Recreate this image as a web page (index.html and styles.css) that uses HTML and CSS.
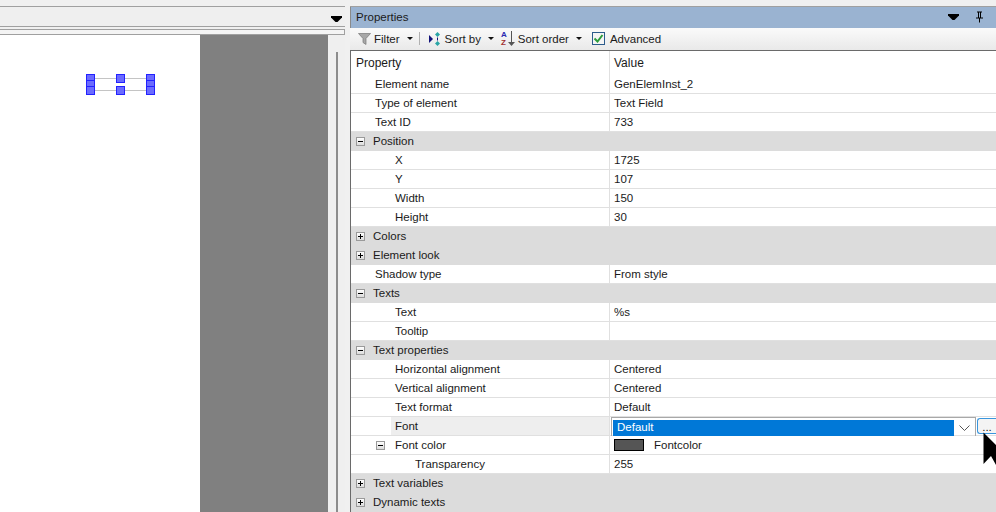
FILE: index.html
```html
<!DOCTYPE html>
<html lang="en">
<head>
  <meta charset="UTF-8">
  <title>Properties</title>
  <link rel="stylesheet" href="styles.css">
</head>
<body>
  <div class="app">
    <div class="editor">
      <div class="editor-head">
        <svg class="caret-big" width="11" height="6" viewBox="0 0 11 6"><path d="M0 0h11v1.500L6.500 6h-2L0 1.500z"/></svg>
      </div>
      <div class="editor-strip"></div>
      <div class="editor-body">
        <div class="canvas">
          <span class="sel-line top"></span>
          <span class="sel-line bottom"></span>
          <span class="handle h1"></span>
          <span class="handle h2"></span>
          <span class="handle h3"></span>
          <span class="handle h4"></span>
          <span class="handle h5"></span>
          <span class="handle h6"></span>
          <span class="handle h7"></span>
          <span class="handle h8"></span>
        </div>
        <div class="backdrop"></div>
        <div class="scroller"><div class="thumb"></div></div>
      </div>
    </div>

    <div class="props">
      <div class="title">
        <span>Properties</span>
        <svg class="caret-big" width="11" height="6" viewBox="0 0 11 6"><path d="M0 0h11v1.500L6.500 6h-2L0 1.500z"/></svg>
        <svg class="pin" width="9" height="12" viewBox="0 0 9 12"><path d="M2 .5h5v1H6v5h2v1H5v4H4v-4H1v-1h2v-5H2zM4 1.500v5h1v-5z"/></svg>
      </div>

      <div class="toolbar">
        <svg class="ico-filter" width="13" height="12" viewBox="0 0 13 12"><path d="M.5.500h12L8 5.500v6L5 9.500v-4z" fill="#a8a8a8" stroke="#777" stroke-width=".7"/></svg>
        <span class="tool-label">Filter</span>
        <i class="caret"></i>
        <span class="sep"></span>
        <svg class="ico-sort" width="13" height="14" viewBox="0 0 13 14"><path d="M0 3l4 4-4 4z" fill="#12127a"/><path d="M8.500 0l2.500 2.500L8.500 5 6 2.500z" fill="#2aa5a5"/><path d="M8.500 9l2.500 2.500L8.500 14 6 11.500z" fill="#2aa5a5"/><path d="M8 5.500h1v3H8z" fill="#12127a"/></svg>
        <span class="tool-label">Sort by</span>
        <i class="caret"></i>
        <span class="az"><b class="az-a">A</b><b class="az-z">Z</b></span>
        <svg class="ico-down" width="7" height="16" viewBox="0 0 7 16"><path d="M3 0h1v11h3l-3.500 4L0 11h3z" fill="#555"/></svg>
        <span class="tool-label">Sort order</span>
        <i class="caret"></i>
        <span class="check">
          <svg width="11" height="9" viewBox="0 0 11 9"><path d="M1.500 4.500l3 3 5-6.500" fill="none" stroke="#2c9c3c" stroke-width="2"/></svg>
        </span>
        <span class="tool-label">Advanced</span>
      </div>

      <div class="grid">
        <div class="row head"><div class="name">Property</div><div class="value">Value</div></div>
        <div class="row"><div class="name l1">Element name</div><div class="value">GenElemInst_2</div></div>
        <div class="row"><div class="name l1">Type of element</div><div class="value">Text Field</div></div>
        <div class="row"><div class="name l1">Text ID</div><div class="value">733</div></div>
        <div class="row group"><span class="tog minus"></span>Position</div>
        <div class="row"><div class="name l2">X</div><div class="value">1725</div></div>
        <div class="row"><div class="name l2">Y</div><div class="value">107</div></div>
        <div class="row"><div class="name l2">Width</div><div class="value">150</div></div>
        <div class="row"><div class="name l2">Height</div><div class="value">30</div></div>
        <div class="row group"><span class="tog plus"></span>Colors</div>
        <div class="row group"><span class="tog plus"></span>Element look</div>
        <div class="row"><div class="name l1">Shadow type</div><div class="value">From style</div></div>
        <div class="row group"><span class="tog minus"></span>Texts</div>
        <div class="row"><div class="name l2">Text</div><div class="value">%s</div></div>
        <div class="row"><div class="name l2">Tooltip</div><div class="value"></div></div>
        <div class="row group"><span class="tog minus"></span>Text properties</div>
        <div class="row"><div class="name l2">Horizontal alignment</div><div class="value">Centered</div></div>
        <div class="row"><div class="name l2">Vertical alignment</div><div class="value">Centered</div></div>
        <div class="row"><div class="name l2">Text format</div><div class="value">Default</div></div>
        <div class="row">
          <div class="name l2 active"><span>Font</span></div>
          <div class="value editing">
            <div class="combo">
              <div class="combo-text">Default</div>
              <svg class="combo-arrow" width="11" height="6" viewBox="0 0 11 6"><path d="M.5.500l5 5 5-5" fill="none" stroke="#555"/></svg>
            </div>
            <div class="dots">...</div>
          </div>
        </div>
        <div class="row">
          <div class="name l2"><span class="tog minus sub"></span>Font color</div>
          <div class="value"><span class="swatch"></span>Fontcolor</div>
        </div>
        <div class="row"><div class="name l3">Transparency</div><div class="value">255</div></div>
        <div class="row group"><span class="tog plus"></span>Text variables</div>
        <div class="row group"><span class="tog plus"></span>Dynamic texts</div>
      </div>
    </div>
  </div>

  <svg class="cursor" width="16" height="40" viewBox="0 0 16 40"><path d="M.5.500L16 16v16l-3 1-5-9-7.500 8z" fill="#000"/></svg>
</body>
</html>
```

FILE: styles.css
```css
html, body {
  margin: 0;
  height: 100%;
  overflow: hidden;
}
body {
  font-family: "Liberation Sans", Arial, sans-serif;
  font-size: 12px;
  color: #1a1a1a;
  background: #f0f0f0;
}
.app {
  display: flex;
  height: 512px;
  padding-top: 6px;
  box-sizing: border-box;
}

/* left side */
.editor {
  width: 345px;
  margin-right: 5px;
  display: flex;
  flex-direction: column;
  border-top: 1px solid #a0a0a0;
}
.editor-head {
  height: 19px;
  background: #efefef;
  border-bottom: 1px solid #a0a0a0;
  display: flex;
  align-items: center;
  justify-content: flex-end;
  padding-right: 3px;
  padding-top: 4px;
  box-sizing: content-box;
  height: 15px;
}
.editor-strip {
  height: 4px;
  margin-top: 2px;
  border-top: 1px solid #a0a0a0;
  border-bottom: 1px solid #a0a0a0;
  border-right: 1px solid #a0a0a0;
  background: #f4f4f4;
}
.editor-body {
  flex: 1;
  display: flex;
}
.canvas {
  width: 200px;
  background: #fff;
  position: relative;
}
.backdrop {
  width: 128px;
  background: #808080;
}
.scroller {
  flex: 1;
  background: #efefef;
  padding: 17px 0 0 8px;
}
.thumb {
  width: 2px;
  height: 100%;
  background: #8c8c8c;
}
.sel-line {
  position: absolute;
  left: 90px;
  width: 60px;
  height: 1px;
  background: #c4c4c4;
}
.sel-line.top { top: 43px; }
.sel-line.bottom { top: 55px; }
.handle {
  position: absolute;
  width: 7px;
  height: 7px;
  background: #6b6bff;
  border: 1px solid #2222ff;
}
.h1 { left: 86px; top: 39px; }
.h2 { left: 86px; top: 45px; }
.h3 { left: 86px; top: 51px; }
.h4 { left: 116px; top: 39px; }
.h5 { left: 116px; top: 51px; }
.h6 { left: 146px; top: 39px; }
.h7 { left: 146px; top: 45px; }
.h8 { left: 146px; top: 51px; }

/* right side */
.props {
  flex: 1;
  display: flex;
  flex-direction: column;
  min-width: 0;
  border-top: 1px solid #a0a0a0;
}
.title {
  height: 22px;
  background: #9ab3d1;
  display: flex;
  align-items: center;
  padding-left: 5px;
  border-left: 1px solid #8a8a8a;
  font-size: 11.500px;
}
.title span { flex: 1; }
.title .caret-big { margin-right: 16px; }
.title .pin { margin-right: 12px; }
.toolbar {
  height: 24px;
  display: flex;
  align-items: center;
  padding-left: 8px;
  background: linear-gradient(#fafafa, #e9e9e9);
  border-bottom: 1px solid #6a6a6a;
}
.tool-label { margin-left: 3px; font-size: 11.500px; }
.caret {
  width: 0;
  height: 0;
  border: 3px solid transparent;
  border-top: 3px solid #111;
  border-bottom: 0;
  margin-left: 7px;
}
.sep {
  width: 1px;
  height: 13px;
  background: #b0b0b0;
  margin: 0 9px 0 6px;
}
.az {
  display: flex;
  flex-direction: column;
  margin-left: 7px;
  font-size: 8px;
  line-height: 8px;
}
.az-a { color: #2a2ab0; }
.az-z { color: #a03030; }
.ico-down { margin-left: 1px; }
.check {
  width: 11px;
  height: 11px;
  border: 1px solid #2c5c8c;
  background: #f4f4f4;
  margin-left: 10px;
  margin-right: 2px;
  display: flex;
  align-items: center;
  justify-content: center;
}
.grid {
  flex: 1;
  background: #fff;
  border-left: 1px solid #6a6a6a;
}
.row {
  display: flex;
  height: 19px;
  box-sizing: border-box;
  border-bottom: 1px solid #e0e0e0;
  line-height: 19px;
  font-size: 11.500px;
}
.row.head {
  height: 24px;
  line-height: 25px;
  font-size: 12px;
  border-bottom: 0;
}
.name {
  width: 259px;
  flex: none;
  box-sizing: border-box;
  border-right: 1px solid #e0e0e0;
  padding-left: 5px;
  position: relative;
}
.value {
  flex: 1;
  padding-left: 4px;
  white-space: nowrap;
  min-width: 0;
}
.l1 { padding-left: 24px; }
.l2 { padding-left: 44px; }
.l3 { padding-left: 64px; }
.group {
  background: #dcdcdc;
  border-bottom: 0;
  padding-left: 22px;
  position: relative;
  margin-bottom: 0;
}
.tog {
  position: absolute;
  left: 5px;
  top: 5px;
  width: 7px;
  height: 7px;
  border: 1px solid #9a9a9a;
  background: linear-gradient(#fff, #dcdcdc);
}
.tog::before {
  content: "";
  position: absolute;
  left: 1px;
  top: 3px;
  width: 5px;
  height: 1px;
  background: #000;
}
.plus::after {
  content: "";
  position: absolute;
  left: 3px;
  top: 1px;
  width: 1px;
  height: 5px;
  background: #000;
}
.tog.sub { left: 25px; }
.active { background: linear-gradient(90deg, #fff 40px, #eeeeee 40px); }
.editing {
  display: flex;
  padding: 0 0 0 1px;
}
.combo {
  flex: 1;
  display: flex;
  align-items: center;
  box-sizing: border-box;
  height: 19px;
  border: 1px solid #a8a8a8;
  border-bottom: 0;
  padding: 2px 0 0 1px;
}
.combo-text {
  flex: 1;
  height: 16px;
  line-height: 15px;
  background: #0078d7;
  color: #fff;
  padding-left: 4px;
}
.combo-arrow { margin: 0 5px 0 5px; }
.dots {
  width: 19px;
  height: 16px;
  margin: 1px 0 0 1px;
  border: 1px solid #3a96dd;
  border-right: 0;
  border-radius: 3px 0 0 3px;
  background: #f4f4f4;
  line-height: 16px;
  text-align: center;
  box-sizing: border-box;
}
.swatch {
  display: inline-block;
  width: 30px;
  height: 12px;
  box-sizing: border-box;
  background: #555;
  border: 1px solid #000;
  margin-right: 10px;
  vertical-align: -2px;
}
.cursor {
  position: absolute;
  left: 983px;
  top: 432px;
}
```
